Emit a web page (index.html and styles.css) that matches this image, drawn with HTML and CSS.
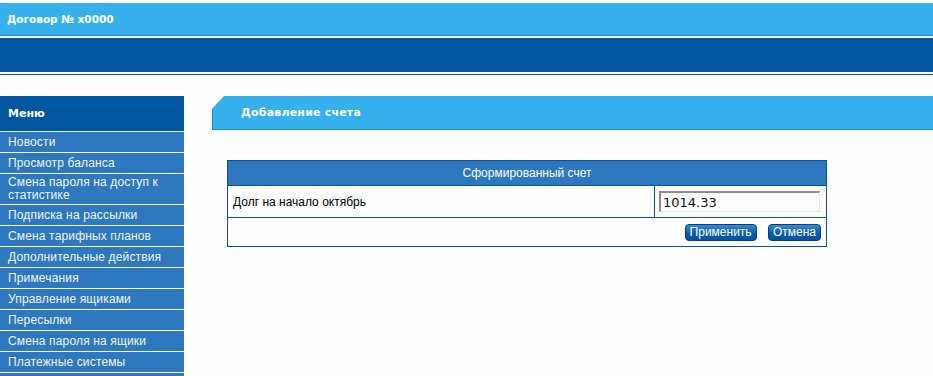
FILE: index.html
```html
<!DOCTYPE html>
<html lang="ru">
<head>
    <meta charset="UTF-8">
    <title>Добавление счета</title>
    <link rel="stylesheet" href="styles.css">
</head>
<body>

<div class="top">
    <div class="top-title">Договор № x0000</div>
    <div class="top-band"></div>
    <div class="top-line"></div>
</div>

<div class="main">
    <div class="menu">
        <div class="menu-head">Меню</div>
        <a class="menu-item" href="#">Новости</a>
        <a class="menu-item" href="#">Просмотр баланса</a>
        <a class="menu-item" href="#">Смена пароля на доступ к статистике</a>
        <a class="menu-item" href="#">Подписка на рассылки</a>
        <a class="menu-item" href="#">Смена тарифных планов</a>
        <a class="menu-item" href="#">Дополнительные действия</a>
        <a class="menu-item" href="#">Примечания</a>
        <a class="menu-item" href="#">Управление ящиками</a>
        <a class="menu-item" href="#">Пересылки</a>
        <a class="menu-item" href="#">Смена пароля на ящики</a>
        <a class="menu-item" href="#">Платежные системы</a>
        <a class="menu-item" href="#"></a>
    </div>

    <div class="content">
        <div class="page-head">
            <div class="page-head-inner">Добавление счета</div>
        </div>

        <table class="bill">
            <tr>
                <th colspan="2">Сформированный счет</th>
            </tr>
            <tr>
                <td class="bill-label">Долг на начало октябрь</td>
                <td class="bill-value"><input type="text" class="bill-input" value="1014.33"></td>
            </tr>
            <tr>
                <td colspan="2" class="bill-actions">
                    <button class="btn">Применить</button>
                    <button class="btn">Отмена</button>
                </td>
            </tr>
        </table>
    </div>
</div>

</body>
</html>
```

FILE: styles.css
```css
body {
    margin: 0;
    padding: 0;
    background-color: #fefefe;
    font-family: "Liberation Sans", Arial, sans-serif;
    font-size: 12px;
    overflow: hidden;
}

.top {
    padding-top: 3px;
}

.top-title {
    height: 32px;
    line-height: 32px;
    padding-left: 7px;
    background-color: #37b1ee;
    border-bottom: 1px solid #1d8fcd;
    color: #fff;
    font-family: "DejaVu Sans", Verdana, sans-serif;
    font-size: 10.5px;
    font-weight: bold;
}

.top-band {
    height: 34px;
    margin-top: 2px;
    background-color: #0057a0;
}

.top-line {
    height: 1px;
    margin-top: 2px;
    background-color: #0057a0;
}

.main {
    display: flex;
    align-items: flex-start;
    margin-top: 21px;
}

.menu {
    width: 184px;
    flex-shrink: 0;
    display: flex;
    flex-direction: column;
    gap: 1px;
}

.menu-head {
    height: 35px;
    line-height: 35px;
    padding-left: 8px;
    background-color: #0057a0;
    color: #fff;
    font-family: "DejaVu Sans", Verdana, sans-serif;
    font-size: 11px;
    font-weight: bold;
}

.menu-item {
    display: flex;
    align-items: center;
    min-height: 20px;
    padding: 2px 8px;
    box-sizing: border-box;
    line-height: 13px;
    background-color: #2d78be;
    color: #f2f6fb;
    text-decoration: none;
    letter-spacing: 0.15px;
}

.content {
    flex: 1;
    margin-left: 28px;
}

.page-head {
    height: 34px;
    background-color: #1d8fcd;
    clip-path: polygon(12px 0, 100% 0, 100% 100%, 0 100%, 0 13px);
}

.page-head-inner {
    height: 33px;
    margin-left: 1px;
    line-height: 33px;
    padding-left: 28px;
    background-color: #37b1ee;
    clip-path: polygon(11px 0, 100% 0, 100% 100%, 0 100%, 0 12px);
    color: #fff;
    font-family: "DejaVu Sans", Verdana, sans-serif;
    font-size: 11px;
    font-weight: bold;
    letter-spacing: 0.2px;
}

.bill {
    width: 600px;
    margin: 30px 0 0 15px;
    border-collapse: collapse;
    border: 1px solid #0057a0;
}

.bill th {
    height: 24px;
    padding: 0;
    background-color: #2d78be;
    color: #fff;
    font-weight: normal;
    text-align: center;
}

.bill td {
    height: 31px;
    padding: 0;
    border-top: 1px solid #0057a0;
}

.bill-label {
    padding-left: 5px !important;
    color: #000;
}

.bill-value {
    width: 171px;
    border-left: 1px solid #0057a0;
}

.bill-input {
    display: block;
    width: 161px;
    height: 21px;
    margin-left: 4px;
    padding: 0 0 0 2px;
    box-sizing: border-box;
    border: 1px solid #e8e8e8;
    border-top: 2px solid #8a8a8a;
    border-left: 2px solid #8a8a8a;
    background-color: #fdfdfd;
    font-family: "DejaVu Sans", Verdana, sans-serif;
    font-size: 13px;
    color: #111;
}

.bill-actions {
    height: 28px !important;
    text-align: right;
    padding-right: 5px !important;
}

.btn {
    height: 17px;
    margin-left: 8px;
    padding: 0 4px;
    border: 1px solid #003f80;
    border-radius: 4px;
    background: linear-gradient(#3a88d0, #0a5ea8 55%, #0054a0);
    color: #fff;
    font-family: "Liberation Sans", Arial, sans-serif;
    font-size: 12px;
    line-height: 15px;
    vertical-align: middle;
    cursor: pointer;
}
```
